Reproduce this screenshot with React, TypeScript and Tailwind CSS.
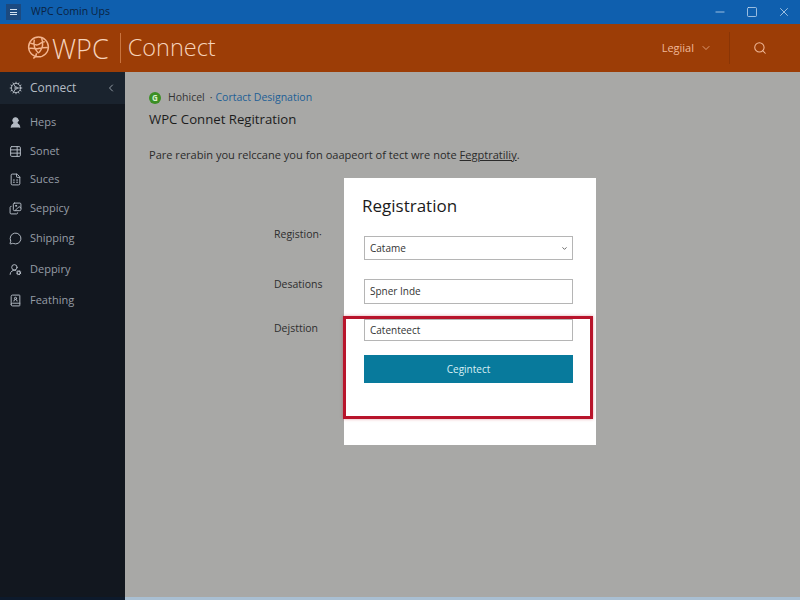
import React from 'react';
import { ChevronDown, ChevronLeft, Cog, FileSpreadsheet, Images, MessageCircle, Minus, Search, Square, TableProperties, UserRound, UserRoundCog, X, BookUser } from 'lucide-react';

const navItems = [
  { label: 'Heps', icon: UserRound, height: 'h-[29px]', fill: 'fill-current' },
  { label: 'Sonet', icon: TableProperties, height: 'h-[28px]', fill: '' },
  { label: 'Suces', icon: FileSpreadsheet, height: 'h-[29px]', fill: '' },
  { label: 'Seppicy', icon: Images, height: 'h-[29px]', fill: '' },
  { label: 'Shipping', icon: MessageCircle, height: 'h-[31px]', fill: '' },
  { label: 'Deppiry', icon: UserRoundCog, height: 'h-[31px]', fill: '' },
  { label: 'Feathing', icon: BookUser, height: 'h-[31px]', fill: '' },
];

const Logo = () => (
  <svg viewBox="0 0 24 24" className="h-[25px] w-[25px] text-[#f3b48e]" fill="none" stroke="currentColor" strokeWidth="1.400">
    <circle cx="12" cy="10.500" r="9.500" />
    <path d="M7 21.500c2-1 3-2.500 3-5M4 7c3 0 4 2 7 1.500s3-3 7-3M8 3.500c-1 4 0 9 4 13M15 2c1 4 2 6 0 10s-3 4-3 4M3 12c3-1 6 1 9 0s5-1 9-1" />
  </svg>
);

export default function App() {
  return (
    <div className="flex h-[600px] w-[800px] flex-col overflow-hidden bg-[#a8a8a6] font-['Open_Sans','Liberation_Sans',sans-serif]">
      {/* window title bar */}
      <div className="flex h-[24px] shrink-0 items-center bg-[#0f5fae]">
        <div className="ml-[6px] flex h-[16px] w-[15px] items-center justify-center bg-[#1c4a80]">
          <div className="flex w-[7px] flex-col gap-[1.500px]">
            <span className="h-px bg-[#d5e2f0]" />
            <span className="h-px bg-[#d5e2f0]" />
            <span className="h-px bg-[#d5e2f0]" />
          </div>
        </div>
        <span className="ml-[10px] text-[10.500px] text-[#0b2342]">WPC Comin Ups</span>
        <div className="ml-auto mr-[9px] flex items-center gap-[19px] text-[#c9dcf0]">
          <Minus className="h-[14px] w-[14px]" strokeWidth={1.300} />
          <Square className="h-[12px] w-[12px]" strokeWidth={1.500} />
          <X className="h-[14px] w-[14px]" strokeWidth={1.300} />
        </div>
      </div>

      {/* brand header */}
      <header className="flex h-[48px] shrink-0 items-center bg-[#9c3d06] text-[#f6d3bb]">
        <div className="ml-[26px]">
          <Logo />
        </div>
        <span className="ml-px text-[27px] leading-none font-light">WPC</span>
        <span className="ml-[11px] h-[30px] w-px bg-[#c9743f]" />
        <span className="ml-[7px] text-[23.500px] leading-none font-light">Connect</span>
        <div className="ml-auto flex items-center text-[#f0b898]">
          <span className="text-[11px]">Legiial</span>
          <ChevronDown className="ml-[6px] h-[12px] w-[12px]" strokeWidth={1.500} />
          <span className="ml-[17px] h-[32px] w-px bg-[#8a3505]" />
          <Search className="ml-[23px] mr-[33px] h-[14px] w-[14px]" strokeWidth={1.800} />
        </div>
      </header>

      <div className="flex min-h-0 flex-1">
        <aside className="flex w-[125px] shrink-0 flex-col bg-[#12171f] text-[#b4bbc4]">
          <div className="flex h-[32px] items-center bg-[#1a232e] pl-[9px] pr-[8px]">
            <Cog className="h-[14px] w-[14px]" strokeWidth={1.600} />
            <span className="ml-[7px] text-[12px]">Connect</span>
            <ChevronLeft className="ml-auto h-[12px] w-[12px]" strokeWidth={1.600} />
          </div>
          <nav className="mt-[4px] flex flex-col">
            {navItems.map(({ label, icon: Icon, height, fill }) => (
              <div key={label} className={`flex items-center pl-[9px] ${height}`}>
                <Icon className={`h-[13px] w-[13px] ${fill}`} strokeWidth={1.800} />
                <span className="ml-[8px] text-[11px] text-[#969da6]">{label}</span>
              </div>
            ))}
          </nav>
        </aside>

        <main className="flex min-w-0 flex-1 flex-col pl-[24px]">
          <div className="mt-[18px] flex h-[16px] items-center text-[10.500px]">
            <span className="flex h-[12px] w-[12px] items-center justify-center rounded-full bg-[#3c8f25] text-[8px] leading-none font-bold text-[#d8f0cf]">G</span>
            <span className="ml-[7px] text-[#333]">Hohicel</span>
            <span className="ml-[5px] text-[#333]">·</span>
            <span className="ml-[3px] text-[#1d5f96]">Cortact Designation</span>
          </div>
          <h1 className="mt-[4px] text-[13.200px] leading-[18px] text-[#1c1c1c]">WPC Connet Regitration</h1>
          <p className="mt-[19px] text-[11.050px] leading-[16px] text-[#2b2b2b]">
            Pare rerabin you relccane you fon oaapeort of tect wre note <span className="underline">Fegptratiliy</span>.
          </p>

          <div className="mt-[15px] flex">
            <div className="ml-[125px] flex w-[70px] flex-col pt-[49px] text-[10.500px] leading-[14px] text-[#2e2e2e]">
              <span>Registion·</span>
              <span className="mt-[36px]">Desations</span>
              <span className="mt-[30px]">Dejsttion</span>
            </div>
            <section className="relative h-[267px] w-[252px] bg-white pl-[20px] pr-[23px] pt-[15px] text-[#222]">
              <h2 className="-ml-[2px] text-[17px] leading-[26px] text-[#1b1b1b]">Registration</h2>
              <div className="mt-[17px] flex h-[24px] items-center justify-between border border-[#b5b5b5] pl-[5px] pr-[4px] text-[10px] text-[#333]">
                <span>Catame</span>
                <ChevronDown className="h-[7px] w-[7px] text-[#555]" strokeWidth={3} />
              </div>
              <div className="mt-[19px] flex h-[25px] items-center border border-[#b5b5b5] pl-[5px] text-[10px] text-[#333]">Spner Inde</div>
              <div className="mt-[15px] flex h-[22px] items-center border border-[#b5b5b5] pl-[5px] text-[10px] text-[#333]">Catenteect</div>
              <button className="mt-[14px] flex h-[28px] w-full items-center justify-center bg-[#087a9c] text-[10px] text-[#d9f0f5]">Cegintect</button>
              {/* red highlight over the last field and the button */}
              <div className="absolute left-[-1px] top-[138px] h-[103px] w-[250px] border-[3px] border-[#b8142b] shadow-[0_0_3px_rgba(184,20,43,0.4)]" />
            </section>
          </div>
        </main>
      </div>
      <div className="flex h-[3px] shrink-0">
        <div className="w-[125px] bg-[#0d1a2c]" />
        <div className="flex-1 bg-[#a9bfd2]" />
      </div>
    </div>
  );
}
